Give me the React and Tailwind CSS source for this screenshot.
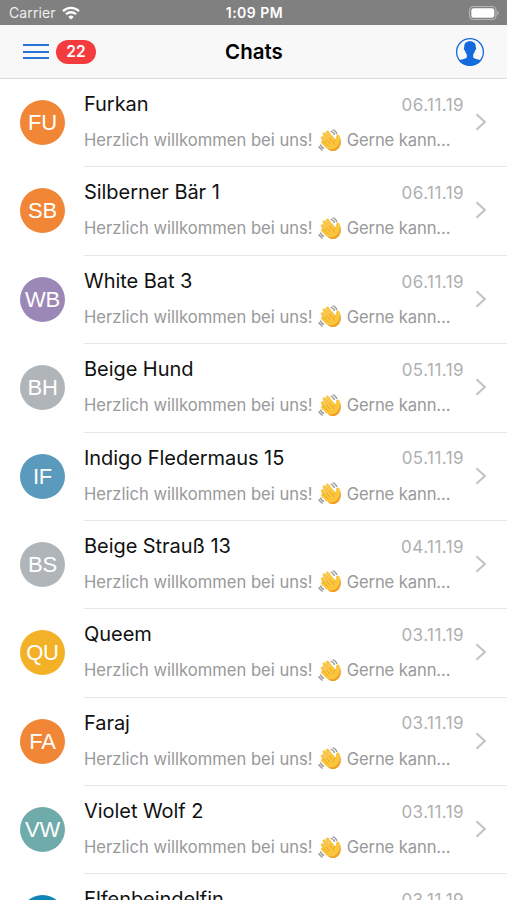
import React from "react";

const chats = [
  { initials: "FU", name: "Furkan", date: "06.11.19", color: "bg-[#f08636]" },
  { initials: "SB", name: "Silberner Bär 1", date: "06.11.19", color: "bg-[#f08636]" },
  { initials: "WB", name: "White Bat 3", date: "06.11.19", color: "bg-[#9c88b6]" },
  { initials: "BH", name: "Beige Hund", date: "05.11.19", color: "bg-[#b0b5b9]" },
  { initials: "IF", name: "Indigo Fledermaus 15", date: "05.11.19", color: "bg-[#5a9abd]" },
  { initials: "BS", name: "Beige Strauß 13", date: "04.11.19", color: "bg-[#b0b5b9]" },
  { initials: "QU", name: "Queem", date: "03.11.19", color: "bg-[#f2b126]" },
  { initials: "FA", name: "Faraj", date: "03.11.19", color: "bg-[#f08636]" },
  { initials: "VW", name: "Violet Wolf 2", date: "03.11.19", color: "bg-[#70abab]" },
  { initials: "EL", name: "Elfenbeindelfin", date: "03.11.19", color: "bg-[#0f86b8]" },
];

const WavingHand = () => (
  <svg viewBox="0 0 24 24" className="w-[24px] h-[24px] shrink-0" fill="none">
    <g stroke="#9a9a9a" strokeWidth="1.500" strokeLinecap="round">
      <path d="M13.200 2.400c1.500.4 2.600 1.400 3.100 2.900M15.200.9c1.800.6 2.900 1.700 3.400 3.400" />
      <path d="M2.600 16c.5 1.600 1.400 2.600 2.900 3.200M1.100 17.800c.6 1.700 1.600 2.700 3.200 3.300" />
    </g>
    <g stroke="#fbc63c" strokeWidth="2.900" strokeLinecap="round">
      <path d="M9.300 3l6.200 8M5.900 4.900l6.900 8.700M4.200 8.900l6.700 7.300M4.400 13.300l4.700 4.600" />
    </g>
    <path
      d="M8.500 10.500l5.300-4 3.700 4.100c.6-.6.800-1.700.6-3.200-.3-2.100 2.500-2.800 3.200-.8.800 2.100 1.500 3.900 1.400 6.700 0 2.900-.9 5.100-3 6.900-3.500 2.900-7.600 2.200-10.500-1.200L5.500 15z"
      fill="#fbc63c"
    />
    <path
      d="M22.100 8.900c.5 1.500.7 2.900.6 4.400 0 2.900-.9 5.100-3 6.900-3.500 2.900-7.400 2.400-10.300-.7 3.200 1.500 6.300 1.300 9-1 2.600-2.300 3.500-5.400 3.700-9.600z"
      fill="#ee9f2a"
    />
    <path
      d="M7.600 4.100l6.300 8.100M5.300 7.300l6.600 7.800M4.500 11.300l5.500 5.800M17.500 10.600c-1.700.8-2.500 2.300-1.900 4.200"
      stroke="#e39a2c"
      strokeWidth=".7"
      strokeLinecap="round"
    />
  </svg>
);

const StatusBar = () => (
  <div className="h-[25px] shrink-0 bg-[#808080] text-white grid grid-cols-3 items-center pl-[9px] pr-[7px]">
    <div className="flex items-center gap-[6px] text-[14px] tracking-[0.1px] text-[#eeeeee]">
      <span>Carrier</span>
      <svg viewBox="0 0 18 14" className="w-[18px] h-[14px]" fill="none" stroke="#fff" strokeWidth="2.300">
        <path d="M1 5.200a11.300 11.300 0 0 1 16 0M4 8.300a7.100 7.100 0 0 1 10 0" />
        <path d="M9 13.600L6.300 10.900a3.800 3.800 0 0 1 5.400 0z" fill="#fff" stroke="none" />
      </svg>
    </div>
    <span className="text-center text-[14px] tracking-[0.5px] font-semibold whitespace-nowrap">1:09 PM</span>
    <svg viewBox="0 0 32 16" className="w-[32px] h-[16px] justify-self-end" fill="none">
      <rect x="1.500" y="1.500" width="26.500" height="13" rx="3.800" stroke="#b4b4b4" strokeWidth="1.200" />
      <rect x="3.300" y="3.300" width="23" height="9.400" rx="2.200" fill="#fff" />
      <path d="M29.300 5.700c2 .8 2 3.800 0 4.600z" fill="#b4b4b4" />
    </svg>
  </div>
);

const Header = () => (
  <header className="h-[54px] shrink-0 bg-[#f8f8f8] border-b border-[#dcdcdc] grid grid-cols-3 items-center pl-[23px] pr-[22px]">
    <div className="flex items-center gap-[7px]">
      <div className="flex flex-col gap-[4.500px] w-[26px]">
        <span className="h-[2px] bg-[#2873d5]" />
        <span className="h-[2px] bg-[#2873d5]" />
        <span className="h-[2px] bg-[#2873d5]" />
      </div>
      <span className="w-[40px] h-[24px] rounded-full bg-[#f43b3d] text-white text-[15.500px] font-semibold flex items-center justify-center">
        22
      </span>
    </div>
    <h1 className="text-center text-[20.500px] leading-6 font-semibold">Chats</h1>
    <svg viewBox="0 0 30 30" className="w-[30px] h-[30px] justify-self-end" fill="none">
      <circle cx="15" cy="15" r="13.400" stroke="#146add" strokeWidth="1.300" />
      <path
        d="M15 4.300c-4.200 0-6 2.400-5.700 5.800-.8.400-.6 2.900.7 3.600.3 1.500.9 2.700 1.800 3.500v3.200c-1.400 1.700-5.800 1.700-8 3.200A13.800 13.800 0 0 0 15 28.700a13.800 13.800 0 0 0 11.200-5.100c-2.200-1.500-6.600-1.500-8-3.200v-3.200c.9-.8 1.500-2 1.800-3.500 1.300-.7 1.500-3.200.7-3.600.3-3.400-1.500-5.800-5.700-5.800z"
        fill="#146add"
      />
    </svg>
  </header>
);

const ChatRow = ({ chat }) => (
  <li className="h-[88.375px] shrink-0 flex pl-5">
    <div
      className={`w-[45px] h-[45px] mt-[21px] shrink-0 rounded-full flex items-center justify-center text-white text-[22px] tracking-[-0.2px] font-['Liberation_Sans',sans-serif] ${chat.color}`}
    >
      {chat.initials}
    </div>
    <div className="ml-[19px] flex-1 min-w-0 flex border-b border-[#e7e7e7]">
      <div className="flex-1 min-w-0">
        <div className="flex justify-between items-center h-[24px] mt-[13px]">
          <span className="text-[20px] text-[#111111] tracking-[-0.05px] whitespace-nowrap">{chat.name}</span>
          <span className="text-[17px] tracking-[0.45px] text-[#b0b0b0] mt-[3px]">{chat.date}</span>
        </div>
        <div className="flex items-center h-[24px] mt-[12.500px] text-[16.600px] text-[#999999] whitespace-nowrap">
          <span>Herzlich willkommen bei uns!</span>
          <span className="ml-[5px] mr-[5px]"><WavingHand /></span>
          <span className="tracking-[-0.1px]">Gerne kann...</span>
        </div>
      </div>
      <svg viewBox="0 0 12 18" className="w-[12px] h-[18px] ml-[11px] mr-5 mt-[34px]" fill="none">
        <path d="M1.500 1.200l8.300 7.800-8.300 7.800" stroke="#c2c2c5" strokeWidth="2.100" />
      </svg>
    </div>
  </li>
);

const App = () => {
  return (
    <div className="h-[900px] w-full overflow-hidden bg-white flex flex-col font-['Inter',sans-serif] text-black">
      <StatusBar />
      <Header />
      <ul className="flex flex-col">
        {chats.map((chat) => (
          <ChatRow key={chat.name} chat={chat} />
        ))}
      </ul>
    </div>
  );
};

export default App;
